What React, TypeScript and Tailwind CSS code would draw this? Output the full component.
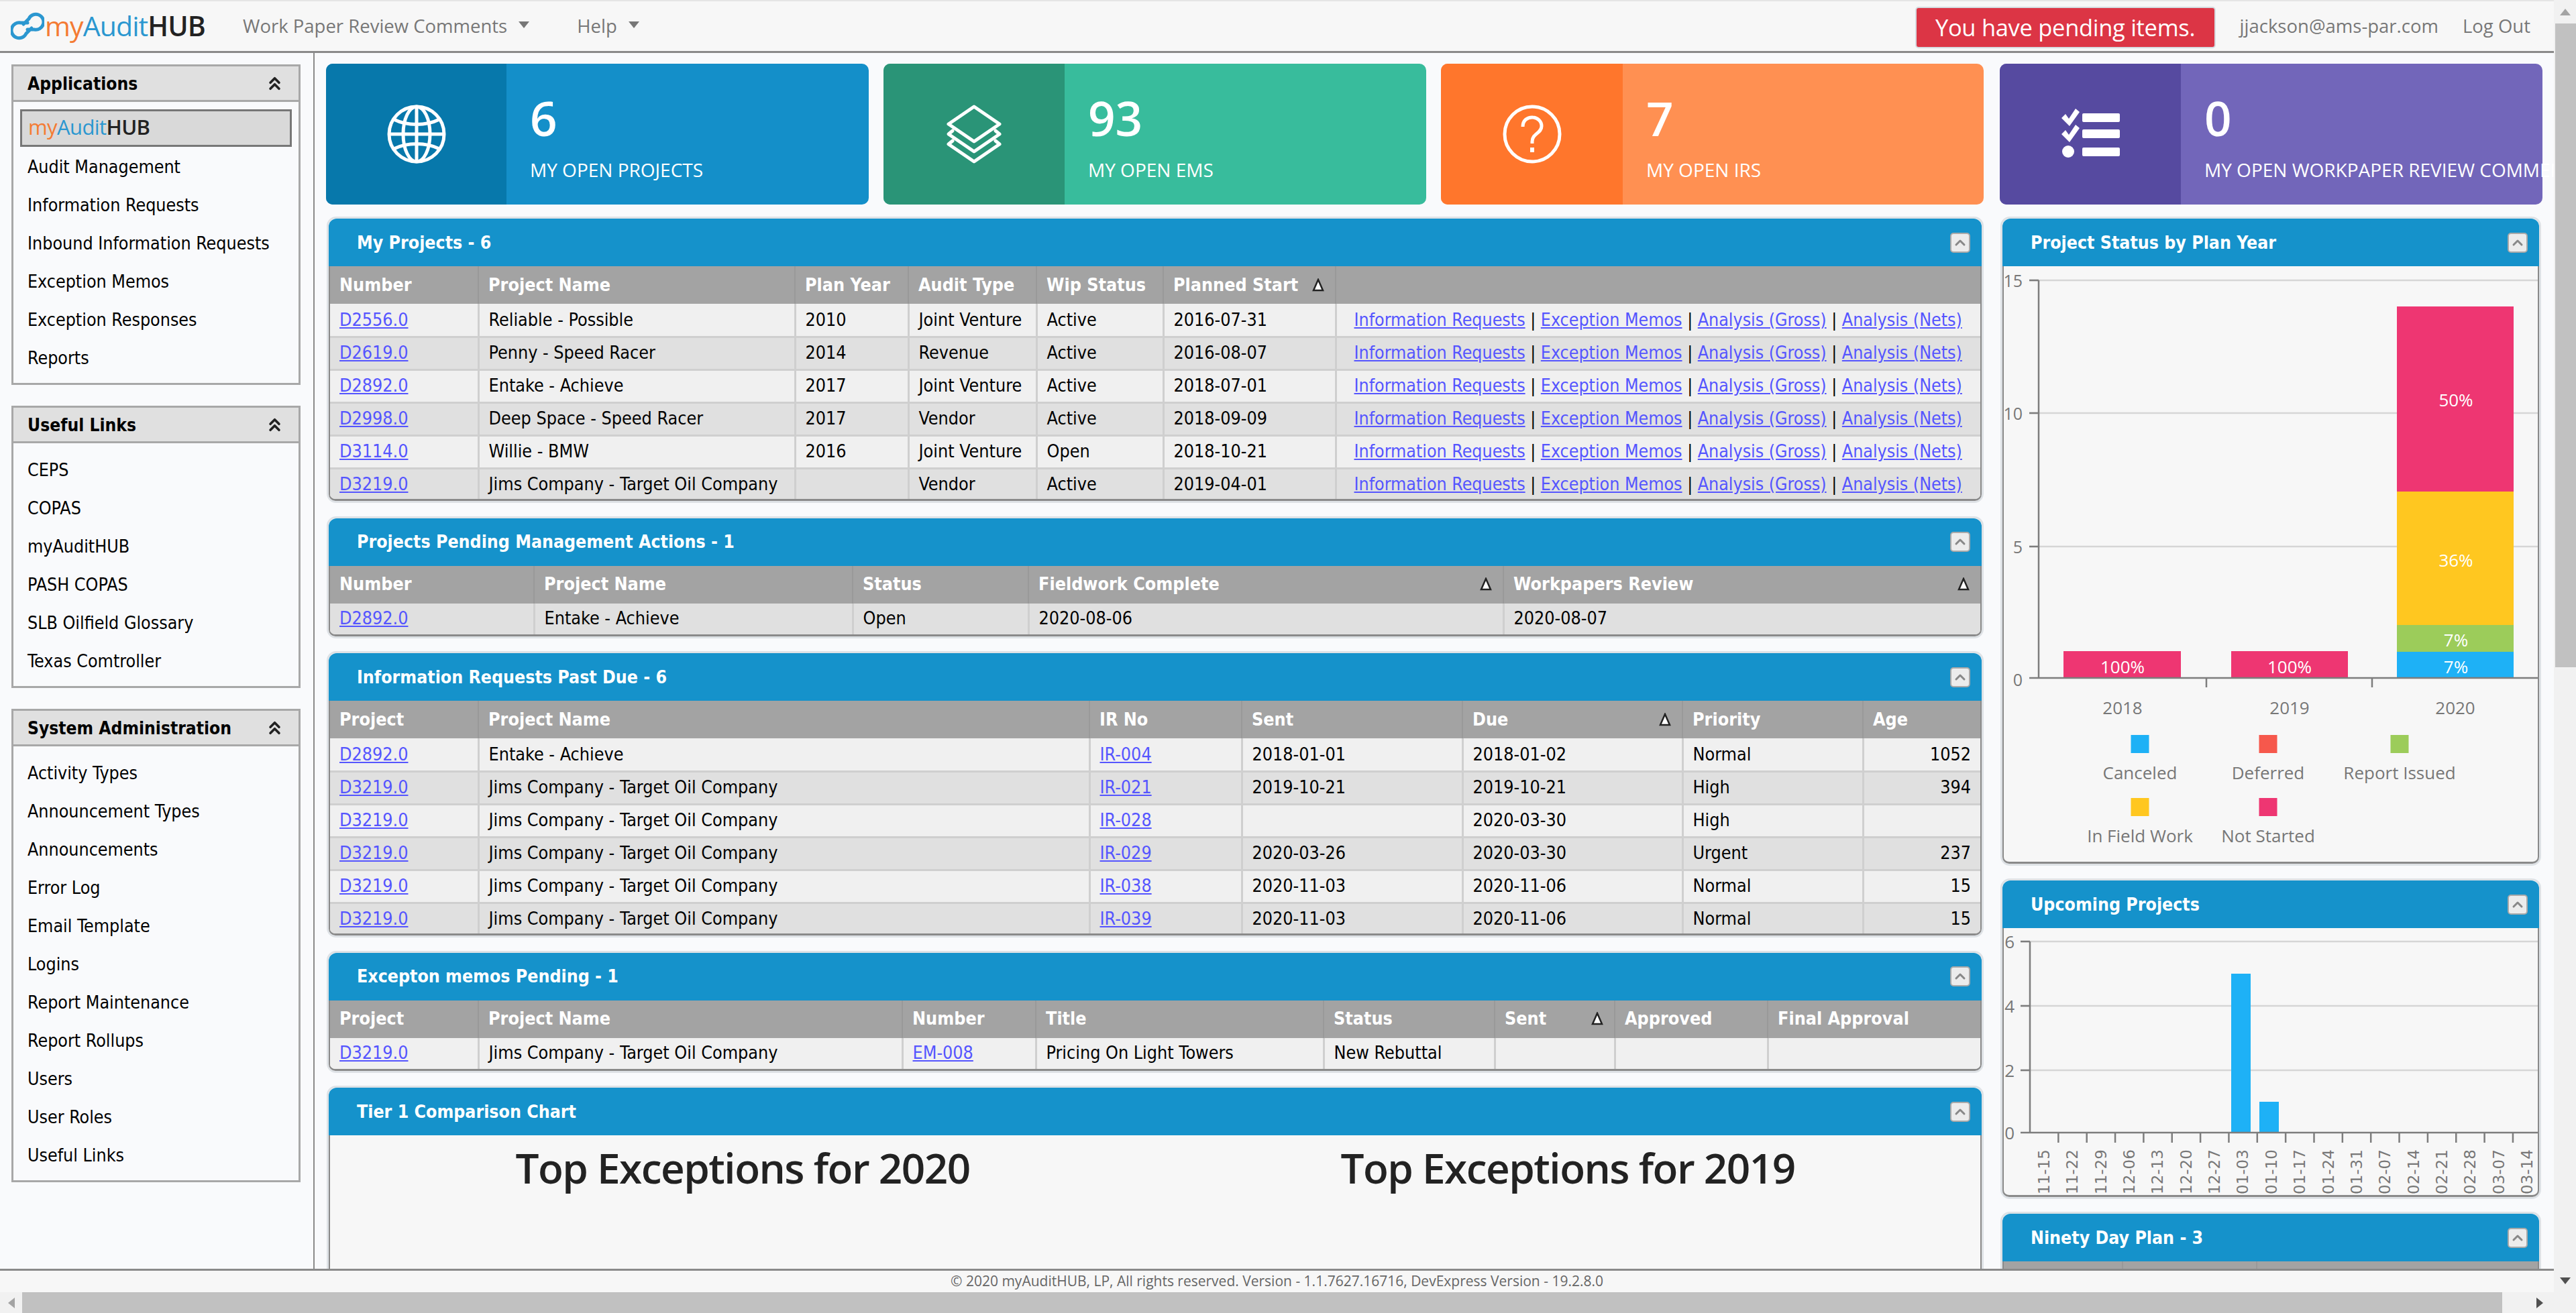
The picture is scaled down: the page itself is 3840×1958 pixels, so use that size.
import React from "react";
import { ChevronUp, ChevronsUp } from "lucide-react";

const Caret = () => (
  <svg width="16" height="10" viewBox="0 0 16 10" className="ml-[17px] mb-[4px]"><polygon points="0,0 16,0 8,10" fill="#777" /></svg>
);

const LogoMark = () => (
  <svg width="50" height="50" viewBox="0 0 50 50" className="shrink-0">
    <path d="M19 22 L27 14 A11.5 11.5 0 1 1 35 30 L25 30 M31 28 L23 36 A11.5 11.5 0 1 1 15 20 L25 20" fill="none" stroke="#2b97d0" strokeWidth="5" strokeLinecap="round" />
  </svg>
);

const LogoText = ({ cls }: { cls: string }) => (
  <span className={cls}>
    <span className="text-[#f47b33]">my</span>
    <span className="text-[#2b97d0]">Audit</span>
    <span className="text-[#222] font-semibold">HUB</span>
  </span>
);

function Header() {
  return (
    <header className="h-[79px] shrink-0 flex items-center bg-[#f7f7f7] border-b-[3px] border-[#8a8a8a] border-t-2 border-t-[#e5e5e5] [font-family:'Open_Sans',sans-serif]">
      <div className="flex items-center pl-[16px] w-[362px]">
        <LogoMark />
        <LogoText cls="text-[41px] leading-none ml-[1px] tracking-[-0.9px] mb-[2px]" />
      </div>
      <div className="flex items-center text-[27.5px] text-[#777]">
        <span>Work Paper Review Comments</span>
        <Caret />
      </div>
      <div className="flex items-center text-[27.5px] text-[#777] ml-[71px]">
        <span>Help</span>
        <Caret />
      </div>
      <div className="ml-auto flex items-center">
        <div className="rounded-[5px] mt-[3px] border-[2px] border-[#d5dbe0] bg-[#dc3545] text-white text-[34.5px] h-[62px] w-[448px] flex items-center justify-center tracking-[-0.3px]">
          You have pending items.
        </div>
        <span className="ml-[36px] text-[27.5px] text-[#777]">jjackson@ams-par.com</span>
        <span className="ml-[36px] mr-[35px] text-[27.5px] text-[#777]">Log Out</span>
      </div>
    </header>
  );
}

function SideCard({ title, items, selected }: { title: string; items: string[]; selected?: boolean }) {
  return (
    <section className="border-[3px] border-[#a8a8a8] bg-[#f9fafc]">
      <div className="h-[53px] bg-[#e0e0e0] border-b-[3px] border-[#a8a8a8] flex items-center justify-between pl-[21px] pr-[20px]">
        <span className="font-bold text-[26.2px] text-black pt-[3px]">{title}</span>
        <ChevronsUp size={31} strokeWidth={2.8} color="#222" />
      </div>
      <div className="pt-[11px] pb-[9px]">
        {selected && (
          <div className="mx-[10px] mb-[1px] h-[56px] border-[3px] border-[#777] bg-[#d9d9d9] flex items-center pl-[9px]">
            <LogoText cls="text-[31px] mb-[3px] [font-family:'Open_Sans',sans-serif] tracking-[-0.6px]" />
          </div>
        )}
        {items.map((t) => (
          <div key={t} className="h-[57px] flex items-center pl-[21px] text-[26.6px] text-black">{t}</div>
        ))}
      </div>
    </section>
  );
}

function Sidebar() {
  return (
    <aside className="w-[469px] shrink-0 border-r-[2px] border-[#8a8a8a] pl-[17px] pr-[19px] pt-[17px] flex flex-col gap-[31px]">
      <SideCard title="Applications" selected items={["Audit Management", "Information Requests", "Inbound Information Requests", "Exception Memos", "Exception Responses", "Reports"]} />
      <SideCard title="Useful Links" items={["CEPS", "COPAS", "myAuditHUB", "PASH COPAS", "SLB Oilfield Glossary", "Texas Comtroller"]} />
      <SideCard title="System Administration" items={["Activity Types", "Announcement Types", "Announcements", "Error Log", "Email Template", "Logins", "Report Maintenance", "Report Rollups", "Users", "User Roles", "Useful Links"]} />
    </aside>
  );
}

const GlobeIcon = () => (
  <svg width="88" height="88" viewBox="0 0 88 88" fill="none" stroke="#fff" strokeWidth="5">
    <circle cx="44" cy="44" r="41" />
    <ellipse cx="44" cy="44" rx="20" ry="41" />
    <path d="M44 3V85M3 44H85M10 22C30 32 58 32 78 22M10 66C30 56 58 56 78 66" />
  </svg>
);
const LayersIcon = () => (
  <svg width="88" height="88" viewBox="0 0 88 88" fill="none" stroke="#fff" strokeWidth="5" strokeLinejoin="round" strokeLinecap="round">
    <path d="M44 3L82 29L44 55L6 29Z" />
    <path d="M12 39L6 44L44 70L82 44L76 39" />
    <path d="M12 54L6 59L44 85L82 59L76 54" />
  </svg>
);
const QuestionIcon = () => (
  <svg width="88" height="88" viewBox="0 0 88 88" fill="none" stroke="#fff" strokeWidth="5">
    <circle cx="44" cy="44" r="41" />
    <path d="M30 33C30 23 37 19 44 19C52 19 58 25 58 32C58 43 44 43 44 55V58" />
    <path d="M44 64V71" strokeWidth="6" />
  </svg>
);
const ChecklistIcon = () => (
  <svg width="88" height="76" viewBox="0 0 88 76" fill="#fff">
    <rect x="32" y="7" width="56" height="13" rx="2" />
    <rect x="32" y="31" width="56" height="13" rx="2" />
    <rect x="32" y="58" width="56" height="13" rx="2" />
    <path d="M1 14L7 8L12 15L22 0L28 5L13 26Z" />
    <path d="M1 38L7 32L12 39L22 24L28 29L13 50Z" />
    <circle cx="11" cy="64" r="9" />
  </svg>
);

function Tile({ dark, light, icon, value, label, pad }: { dark: string; light: string; icon: React.ReactNode; value: string; label: string; pad: string }) {
  return (
    <div className={`${light} h-[210px] w-[809px] rounded-[10px] flex text-white [font-family:'Open_Sans',sans-serif]`}>
      <div className={`${dark} ${pad} h-full rounded-l-[10px] flex items-center justify-center shrink-0`}>{icon}</div>
      <div className="pl-[35px] pt-[35px] whitespace-nowrap">
        <div className="text-[71px] leading-[92px] font-semibold">{value}</div>
        <div className="text-[28px] leading-[36px] mt-[13px]">{label}</div>
      </div>
    </div>
  );
}

const Sort = () => (
  <svg width="18" height="20" viewBox="0 0 18 20" className="shrink-0 mr-[-2px]"><polygon points="9,2 16,18 2,18" fill="#fff" stroke="#222" strokeWidth="2.5" /></svg>
);

function Panel({ title, children, bodyCls }: { title: string; children: React.ReactNode; bodyCls?: string }) {
  return (
    <section className="border-[3px] border-[#dee2e6] rounded-[14px] shrink-0">
      <div className="h-[71px] bg-[#1592cb] rounded-t-[12px] flex items-center justify-between pl-[42px] pr-[17px]">
        <span className="text-white font-bold text-[26.5px]">{title}</span>
        <span className="w-[30px] h-[30px] rounded-[5px] bg-[#ececec] border-[2px] border-[#a9a9a9] flex items-center justify-center">
          <ChevronUp size={24} strokeWidth={3} color="#888" />
        </span>
      </div>
      <div className={`border-x-[2px] border-b-[3px] border-[#8a8a8a] rounded-b-[10px] overflow-hidden bg-[#f7f7f7] ${bodyCls ?? ""}`}>
        {children}
      </div>
    </section>
  );
}

const A = ({ t }: { t: string }) => <a className="text-[#5555ff] underline cursor-pointer">{t}</a>;

function DataTable({ cols, head, rows, sorted = [], rightCols = [], dimFirst }: { cols: string[]; head: string[]; rows: React.ReactNode[][]; sorted?: number[]; rightCols?: number[]; dimFirst?: boolean }) {
  return (
    <table className="w-full table-fixed border-collapse text-[26.7px]">
      <colgroup>{cols.map((c, i) => <col key={i} className={c} />)}</colgroup>
      <thead>
        <tr className="h-[56px] bg-[#a3a3a3]">
          {head.map((h, i) => (
            <th key={i} className={`font-bold text-white text-left pl-[14px] pr-[18px] ${i ? "border-l-[2px] border-[#999]" : ""}`}>
              <div className="flex items-center justify-between whitespace-nowrap"><span>{h}</span>{sorted.includes(i) && <Sort />}</div>
            </th>
          ))}
        </tr>
      </thead>
      <tbody>
        {rows.map((r, ri) => {
          const last = ri === rows.length - 1;
          const alt = dimFirst ? true : ri % 2 === 1;
          return (
            <tr key={ri} className={`${last ? "h-[46px]" : "h-[49px]"} ${alt ? "bg-[#e0e0e0]" : "bg-[#f0f0f0]"}`}>
              {r.map((c, i) => (
                <td key={i} className={`px-[14px] whitespace-nowrap text-black border-[#cfcfcf] ${last ? "" : "border-b-[3px]"} ${i ? "border-l-[3px]" : ""} ${rightCols.includes(i) ? "text-right" : ""}`}>{c}</td>
              ))}
            </tr>
          );
        })}
      </tbody>
    </table>
  );
}

const Links = () => (
  <span className="pl-[12px] text-[26.55px]">
    <A t="Information Requests" /> | <A t="Exception Memos" /> | <A t="Analysis (Gross)" /> | <A t="Analysis (Nets)" />
  </span>
);

const projects: [string, string, string, string, string, string][] = [
  ["D2556.0", "Reliable - Possible", "2010", "Joint Venture", "Active", "2016-07-31"],
  ["D2619.0", "Penny - Speed Racer", "2014", "Revenue", "Active", "2016-08-07"],
  ["D2892.0", "Entake - Achieve", "2017", "Joint Venture", "Active", "2018-07-01"],
  ["D2998.0", "Deep Space - Speed Racer", "2017", "Vendor", "Active", "2018-09-09"],
  ["D3114.0", "Willie - BMW", "2016", "Joint Venture", "Open", "2018-10-21"],
  ["D3219.0", "Jims Company - Target Oil Company", "", "Vendor", "Active", "2019-04-01"],
];

const JC = "Jims Company - Target Oil Company";
const irs: string[][] = [
  ["D2892.0", "Entake - Achieve", "IR-004", "2018-01-01", "2018-01-02", "Normal", "1052"],
  ["D3219.0", JC, "IR-021", "2019-10-21", "2019-10-21", "High", "394"],
  ["D3219.0", JC, "IR-028", "", "2020-03-30", "High", ""],
  ["D3219.0", JC, "IR-029", "2020-03-26", "2020-03-30", "Urgent", "237"],
  ["D3219.0", JC, "IR-038", "2020-11-03", "2020-11-06", "Normal", "15"],
  ["D3219.0", JC, "IR-039", "2020-11-03", "2020-11-06", "Normal", "15"],
];

const axis = "#7d7d7d";
const grid = "#d6d6d6";
const lbl = "#777";
const SVG_FONT = "'Open Sans', sans-serif";

function StatusChart() {
  const barLabel = (x: number, y: number, t: string) => (
    <text x={x} y={y} fill="#fff" fontSize="26" textAnchor="middle" fontFamily={SVG_FONT}>{t}</text>
  );
  const legend = (cx: number, y: number, c: string, t: string) => (
    <g key={t}>
      <rect x={cx - 13.5} y={y} width="27" height="27" fill={c} />
      <text x={cx} y={y + 66} fill={lbl} fontSize="26" textAnchor="middle" fontFamily={SVG_FONT}>{t}</text>
    </g>
  );
  return (
    <svg viewBox="2987 397 796 888" width="796" height="888" className="block">
      {[418, 616, 815].map((y) => <line key={y} x1="3025" x2="3785" y1={y} y2={y} stroke={grid} strokeWidth="2.5" />)}
      <rect x="3076" y="971" width="175" height="40" fill="#ee3672" />
      <rect x="3326" y="971" width="174" height="40" fill="#ee3672" />
      <rect x="3573" y="457" width="174" height="276" fill="#ee3672" />
      <rect x="3573" y="733" width="174" height="199" fill="#ffc720" />
      <rect x="3573" y="932" width="174" height="40" fill="#9ccc5a" />
      <rect x="3573" y="972" width="174" height="39" fill="#1eb1f6" />
      <line x1="3039" x2="3039" y1="418" y2="1011" stroke={axis} strokeWidth="2.5" />
      <line x1="3025" x2="3785" y1="1011" y2="1011" stroke={axis} strokeWidth="2.5" />
      {[418, 616, 815].map((y) => <line key={y} x1="3025" x2="3039" y1={y} y2={y} stroke={axis} strokeWidth="2.5" />)}
      {[3289, 3536].map((x) => <line key={x} x1={x} x2={x} y1="1011" y2="1025" stroke={axis} strokeWidth="2.5" />)}
      {[["15", 428], ["10", 626], ["5", 825], ["0", 1023]].map(([t, y]) => (
        <text key={t} x="3015" y={y} fill={lbl} fontSize="25" textAnchor="end" fontFamily={SVG_FONT}>{t}</text>
      ))}
      {barLabel(3164, 1004, "100%")}
      {barLabel(3413, 1004, "100%")}
      {barLabel(3661, 606, "50%")}
      {barLabel(3661, 845, "36%")}
      {barLabel(3661, 964, "7%")}
      {barLabel(3661, 1004, "7%")}
      {[["2018", 3164], ["2019", 3413], ["2020", 3660]].map(([t, x]) => (
        <text key={t} x={x} y="1065" fill={lbl} fontSize="26" textAnchor="middle" fontFamily={SVG_FONT}>{t}</text>
      ))}
      {legend(3190, 1096, "#1eb1f6", "Canceled")}
      {legend(3381, 1096, "#f6584c", "Deferred")}
      {legend(3577, 1096, "#9ccc5a", "Report Issued")}
      {legend(3190, 1190, "#ffc720", "In Field Work")}
      {legend(3381, 1190, "#ee3672", "Not Started")}
    </svg>
  );
}

const weeks = ["11-15", "11-22", "11-29", "12-06", "12-13", "12-20", "12-27", "01-03", "01-10", "01-17", "01-24", "01-31", "02-07", "02-14", "02-21", "02-28", "03-07", "03-14"];

function UpcomingChart() {
  return (
    <svg viewBox="2987 1384 796 398" width="796" height="398" className="block">
      {[1404, 1500, 1596].map((y) => <line key={y} x1="3012" x2="3785" y1={y} y2={y} stroke={grid} strokeWidth="2.5" />)}
      <rect x="3326" y="1452" width="29" height="237" fill="#1eb1f6" />
      <rect x="3368" y="1643" width="29" height="46" fill="#1eb1f6" />
      <line x1="3026" x2="3026" y1="1404" y2="1689" stroke={axis} strokeWidth="2.5" />
      <line x1="3012" x2="3785" y1="1689" y2="1689" stroke={axis} strokeWidth="2.5" />
      {[1404, 1500, 1596].map((y) => <line key={y} x1="3012" x2="3026" y1={y} y2={y} stroke={axis} strokeWidth="2.5" />)}
      {weeks.map((w, i) => {
        const x = 3026 + i * 42.35;
        return (
          <g key={w}>
            {i > 0 && <line x1={x} x2={x} y1="1689" y2="1704" stroke={axis} strokeWidth="2.5" />}
            <text x="0" y="0" transform={`translate(${x + 29} 1781) rotate(-90)`} fill={lbl} fontSize="23" fontFamily="'DejaVu Sans', sans-serif">{w}</text>
          </g>
        );
      })}
      {[["6", 1414], ["4", 1510], ["2", 1606], ["0", 1699]].map(([t, y]) => (
        <text key={t} x="3003" y={y} fill={lbl} fontSize="26" textAnchor="end" fontFamily={SVG_FONT}>{t}</text>
      ))}
    </svg>
  );
}

function Scrollbars({ children }: { children: React.ReactNode }) {
  return (
    <div className="w-[3840px] h-[1958px] flex flex-col overflow-hidden bg-[#f1f1f1]">
      <div className="flex flex-1 min-h-0">
        <div className="w-[3807px] shrink-0 flex flex-col min-h-0">{children}</div>
        <div className="w-[33px] shrink-0 flex flex-col bg-[#f1f1f1]">
          <div className="h-[35px] flex items-center justify-center">
            <svg width="16" height="10" viewBox="0 0 16 10"><polygon points="8,0 16,10 0,10" fill="#a3a3a3" /></svg>
          </div>
          <div className="h-[960px] ml-[2px] bg-[#c1c1c1]" />
          <div className="flex-1" />
          <div className="h-[35px] flex items-center justify-center">
            <svg width="16" height="10" viewBox="0 0 16 10"><polygon points="0,0 16,0 8,10" fill="#505050" /></svg>
          </div>
        </div>
      </div>
      <div className="h-[31px] shrink-0 flex bg-[#f1f1f1]">
        <div className="w-[33px] flex items-center justify-center">
          <svg width="10" height="16" viewBox="0 0 10 16"><polygon points="10,0 10,16 0,8" fill="#a3a3a3" /></svg>
        </div>
        <div className="w-[3697px] bg-[#c1c1c1]" />
        <div className="w-[77px] flex items-center justify-center">
          <svg width="10" height="16" viewBox="0 0 10 16" className="ml-[35px]"><polygon points="0,0 10,8 0,16" fill="#505050" /></svg>
        </div>
      </div>
    </div>
  );
}

export default function App() {
  return (
    <Scrollbars>
      <div className="flex flex-col h-full min-h-0 [font-family:'DejaVu_Sans_Condensed','Liberation_Sans',sans-serif]">
        <Header />
        <div className="flex flex-1 min-h-0 bg-[#f9fafc]">
          <Sidebar />
          <main className="flex-1 min-w-0 overflow-hidden pl-[17px] pt-[16px]">
            <div className="flex gap-[22px] w-[3305px]">
              <Tile dark="bg-[#0778ab]" light="bg-[#148fc9]" pad="w-[269px]" icon={<GlobeIcon />} value="6" label="MY OPEN PROJECTS" />
              <Tile dark="bg-[#2a9477]" light="bg-[#38bc9c]" pad="w-[270px]" icon={<LayersIcon />} value="93" label="MY OPEN EMS" />
              <Tile dark="bg-[#ff762c]" light="bg-[#ff9052]" pad="w-[271px]" icon={<QuestionIcon />} value="7" label="MY OPEN IRS" />
              <div className="ml-[2px]">
                <Tile dark="bg-[#564aa0]" light="bg-[#7266ba]" pad="w-[270px]" icon={<ChecklistIcon />} value="0" label="MY OPEN WORKPAPER REVIEW COMMENTS" />
              </div>
            </div>
            <div className="flex gap-[25px] mt-[18px] ml-[1px] items-start">
              <div className="w-[2470px] shrink-0 flex flex-col gap-[19.5px]">
                <Panel title="My Projects - 6">
                  <DataTable
                    cols={["w-[221px]", "w-[472px]", "w-[169px]", "w-[191px]", "w-[189px]", "w-[257px]", "w-auto"]}
                    head={["Number", "Project Name", "Plan Year", "Audit Type", "Wip Status", "Planned Start", ""]}
                    sorted={[5]}
                    rows={projects.map((p) => [<A t={p[0]} />, p[1], p[2], p[3], p[4], p[5], <Links />])}
                  />
                </Panel>
                <Panel title="Projects Pending Management Actions - 1">
                  <DataTable
                    cols={["w-[304px]", "w-[475px]", "w-[262px]", "w-[708px]", "w-auto"]}
                    head={["Number", "Project Name", "Status", "Fieldwork Complete", "Workpapers Review"]}
                    sorted={[3, 4]}
                    dimFirst
                    rows={[[<A t="D2892.0" />, "Entake - Achieve", "Open", "2020-08-06", "2020-08-07"]]}
                  />
                </Panel>
                <Panel title="Information Requests Past Due - 6">
                  <DataTable
                    cols={["w-[221px]", "w-[911px]", "w-[227px]", "w-[329px]", "w-[328px]", "w-[269px]", "w-auto"]}
                    head={["Project", "Project Name", "IR No", "Sent", "Due", "Priority", "Age"]}
                    sorted={[4]}
                    rightCols={[6]}
                    rows={irs.map((r) => [<A t={r[0]} />, r[1], <A t={r[2]} />, r[3], r[4], r[5], r[6]])}
                  />
                </Panel>
                <Panel title="Excepton memos Pending - 1">
                  <DataTable
                    cols={["w-[221px]", "w-[632px]", "w-[199px]", "w-[429px]", "w-[255px]", "w-[179px]", "w-[228px]", "w-auto"]}
                    head={["Project", "Project Name", "Number", "Title", "Status", "Sent", "Approved", "Final Approval"]}
                    sorted={[5]}
                    rows={[[<A t="D3219.0" />, JC, <A t="EM-008" />, "Pricing On Light Towers", "New Rebuttal", "", "", ""]]}
                  />
                </Panel>
                <Panel title="Tier 1 Comparison Chart" bodyCls="h-[400px]">
                  <div className="flex text-[62px] font-semibold text-[#222] [font-family:'Open_Sans',sans-serif] tracking-[-1.5px] pt-[2px]">
                    <div className="w-[1236px] text-center">Top Exceptions for 2020</div>
                    <div className="w-[1236px] text-center">Top Exceptions for 2019</div>
                  </div>
                </Panel>
              </div>
              <div className="w-[806px] shrink-0 flex flex-col gap-[19px]">
                <Panel title="Project Status by Plan Year"><StatusChart /></Panel>
                <Panel title="Upcoming Projects"><UpcomingChart /></Panel>
                <Panel title="Ninety Day Plan - 3">
                  <div className="h-[60px] bg-[#a3a3a3] flex">
                    <div className="w-[178px] border-r-[2px] border-[#999]" />
                    <div className="w-[200px] border-r-[2px] border-[#999]" />
                  </div>
                </Panel>
              </div>
            </div>
          </main>
        </div>
        <footer className="h-[35px] shrink-0 border-t-[3px] border-[#8a8a8a] bg-[#f7f7f7] flex items-center justify-center text-[21px] text-[#666] [font-family:'Open_Sans',sans-serif]">
          © 2020 myAuditHUB, LP, All rights reserved. Version - 1.1.7627.16716, DevExpress Version - 19.2.8.0
        </footer>
      </div>
    </Scrollbars>
  );
}
